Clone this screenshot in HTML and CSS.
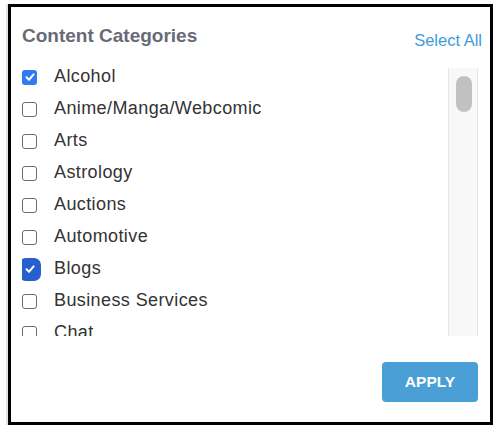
FILE: index.html
```html
<!DOCTYPE html>
<html lang="en">
<head>
<meta charset="utf-8">
<title>Content Categories</title>
<link rel="stylesheet" href="styles.css">
</head>
<body>
<div class="page">
  <div class="frame">
    <div class="header">
      <h2 class="title">Content Categories</h2>
      <a class="select-all">Select All</a>
    </div>
    <div class="body">
      <ul class="list">
        <li class="row"><span class="cb checked"><svg viewBox="0 0 14 14" width="14" height="14"><path d="M3.5 7.3 L6 9.8 L10.6 4.4" fill="none" stroke="#fff" stroke-width="2" stroke-linecap="round" stroke-linejoin="round"/></svg></span><span class="label">Alcohol</span></li>
        <li class="row"><span class="cb"></span><span class="label">Anime/Manga/Webcomic</span></li>
        <li class="row"><span class="cb"></span><span class="label">Arts</span></li>
        <li class="row"><span class="cb"></span><span class="label">Astrology</span></li>
        <li class="row"><span class="cb"></span><span class="label">Auctions</span></li>
        <li class="row"><span class="cb"></span><span class="label">Automotive</span></li>
        <li class="row"><span class="cb checked focus"><svg viewBox="0 0 14 14" width="14" height="14"><path d="M3.5 7.3 L6 9.8 L10.6 4.4" fill="none" stroke="#fff" stroke-width="2" stroke-linecap="round" stroke-linejoin="round"/></svg></span><span class="label">Blogs</span></li>
        <li class="row"><span class="cb"></span><span class="label">Business Services</span></li>
        <li class="row"><span class="cb"></span><span class="label">Chat</span></li>
        <li class="row"><span class="cb"></span><span class="label">Child Education</span></li>
      </ul>
      <div class="track"><div class="thumb"></div></div>
    </div>
    <div class="footer">
      <button class="apply">APPLY</button>
    </div>
  </div>
</div>
</body>
</html>
```

FILE: styles.css
```css
html, body {
  margin: 0;
  padding: 0;
  background: #fff;
}
body {
  font-family: "Liberation Sans", Arial, Helvetica, sans-serif;
}
.page {
  padding: 4px 1px 5px 8px;
}
.frame {
  border: 3px solid #000;
  height: 415px;
  box-shadow: -2px 0 0 #e3e3e3;
  padding: 0 8px 0 11px;
  display: flex;
  flex-direction: column;
}
.header {
  display: flex;
  justify-content: space-between;
  align-items: flex-start;
  padding-top: 17px;
}
.title {
  margin: 0;
  font-size: 19px;
  line-height: 24px;
  font-weight: bold;
  color: #686b77;
}
.select-all {
  margin-top: 6px;
  font-size: 16.5px;
  line-height: 20px;
  color: #3e9bd8;
  cursor: pointer;
}
.body {
  display: flex;
  margin-top: 16px;
  margin-right: 4px;
  height: 270px;
}
.list {
  flex: 1;
  list-style: none;
  margin: 0;
  padding: 0;
  overflow: hidden;
}
.row {
  display: flex;
  align-items: center;
  height: 20px;
  margin-bottom: 12px;
}
.cb {
  box-sizing: border-box;
  width: 15px;
  height: 15px;
  margin-top: 2px;
  border: 1.5px solid #6c6c6c;
  border-radius: 3px;
  flex-shrink: 0;
  display: flex;
  align-items: center;
  justify-content: center;
}
.cb.checked {
  border: none;
  background: #2f7cf0;
}
.cb.focus {
  width: 16px;
  height: 17px;
  border-radius: 4px;
  background: #2560cc;
  box-shadow: 0 0 0 3px #2560cc;
}
.label {
  margin-left: 17px;
  font-size: 18px;
  line-height: 20px;
  letter-spacing: 0.4px;
  color: #333;
  white-space: nowrap;
}
.cb.focus + .label {
  margin-left: 16px;
}
.track {
  width: 28px;
  margin-top: 2px;
  background: #f8f8f8;
  border-left: 1px solid #e6e6e6;
  border-right: 1px solid #e6e6e6;
  padding-top: 8px;
}
.thumb {
  width: 16px;
  height: 36px;
  margin-left: 7px;
  border-radius: 8px;
  background: #c1c1c1;
}
.footer {
  display: flex;
  justify-content: flex-end;
  margin-top: 26px;
  margin-right: 4px;
}
.apply {
  width: 96px;
  height: 40px;
  border: none;
  border-radius: 4px;
  background: #4a9fd6;
  color: #fff;
  font-family: "Liberation Sans", Arial, sans-serif;
  font-weight: bold;
  font-size: 15.5px;
  padding: 0;
  cursor: pointer;
}
```
